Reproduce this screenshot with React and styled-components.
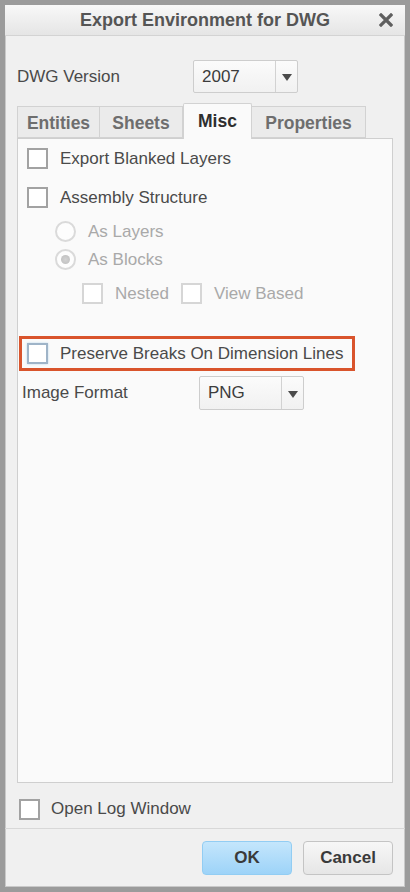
import React from "react";
import styled, { createGlobalStyle } from "styled-components";

const GlobalStyle = createGlobalStyle`
  html, body {
    margin: 0;
    padding: 0;
    background: #ffffff;
  }
  * {
    box-sizing: border-box;
  }
`;

const Window = styled.div`
  width: 410px;
  height: 892px;
  border: 5px solid #9b9b9b;
  box-shadow: inset 0 0 0 1px #c9c9c9;
  background: #f0f0f0;
  display: flex;
  flex-direction: column;
  font-family: "Liberation Sans", Arial, sans-serif;
  font-size: 17px;
  color: #4a4a4a;
`;

const TitleBar = styled.div`
  height: 31px;
  flex-shrink: 0;
  background: linear-gradient(#f8f8f8, #e5e5e5);
  border-bottom: 1px solid #d3d3d3;
  display: flex;
  align-items: center;
  justify-content: center;
  position: relative;
  font-weight: bold;
  font-size: 18px;
  color: #555555;
`;

const CloseButton = styled.div`
  position: absolute;
  right: 12px;
  top: 8px;
  width: 14px;
  height: 14px;
  display: flex;
`;

const Main = styled.div`
  flex: 1;
  display: flex;
  flex-direction: column;
  padding: 24px 12px 9px 12px;
`;

const FieldRow = styled.div`
  display: flex;
  align-items: center;
  height: ${(p) => p.$h || 33}px;
  margin-top: ${(p) => p.$mt || 0}px;
  margin-left: ${(p) => p.$ml || 0}px;
`;

const FieldLabel = styled.span`
  width: ${(p) => p.$w}px;
  flex-shrink: 0;
`;

const Select = styled.div`
  width: ${(p) => p.$w}px;
  height: ${(p) => p.$h}px;
  display: flex;
  background: linear-gradient(#fbfbfb, #f1f1f1);
  border: 1px solid #cdcdcd;
  border-radius: 2px;
`;

const SelectValue = styled.div`
  flex: 1;
  display: flex;
  align-items: center;
  padding-left: 8px;
  color: #3c3c3c;
  border-right: 1px solid #d2d2d2;
`;

const SelectArrow = styled.div`
  width: 21px;
  display: flex;
  align-items: center;
  justify-content: center;
  &::after {
    content: "";
    border-left: 5px solid transparent;
    border-right: 5px solid transparent;
    border-top: 7px solid #4b4b4b;
    margin-top: 2px;
  }
`;

const TabStrip = styled.div`
  display: flex;
  align-items: flex-end;
  margin-top: 10px;
  height: 35px;
  flex-shrink: 0;
`;

const Tab = styled.div`
  width: ${(p) => p.$w}px;
  height: ${(p) => (p.$active ? 36 : 32)}px;
  margin-bottom: ${(p) => (p.$active ? -1 : 0)}px;
  display: flex;
  align-items: center;
  justify-content: center;
  font-weight: bold;
  font-size: 17.5px;
  color: ${(p) => (p.$active ? "#2e2e2e" : "#6e6e6e")};
  background: ${(p) => (p.$active ? "#fafafa" : "#ebebeb")};
  border: 1px solid #d2d2d2;
  border-bottom: ${(p) => (p.$active ? "none" : "1px solid #d2d2d2")};
  border-left: ${(p) => (p.$first || p.$active ? "1px solid #d2d2d2" : "none")};
  border-radius: ${(p) => (p.$active ? "2px 2px 0 0" : "0")};
  position: relative;
  z-index: ${(p) => (p.$active ? 1 : 0)};
  padding-top: ${(p) => (p.$active ? 0 : 2)}px;
`;

const Panel = styled.div`
  flex: 1;
  background: #fafafa;
  border: 1px solid #cfcfcf;
  padding: 9px 9px 0 9px;
  display: flex;
  flex-direction: column;
`;

const Row = styled.div`
  display: flex;
  align-items: center;
  height: 21px;
  margin-top: ${(p) => p.$mt || 0}px;
  padding-left: ${(p) => p.$indent || 0}px;
  gap: 12px;
  color: ${(p) => (p.$disabled ? "#a9a9a9" : "#4a4a4a")};
`;

const Box = styled.span`
  width: 21px;
  height: 21px;
  flex-shrink: 0;
  background: #ffffff;
  border: 2px solid ${(p) => (p.$disabled ? "#d6d6d6" : p.$focus ? "#9fb4c8" : "#a2a2a2")};
  box-shadow: ${(p) => (p.$focus ? "0 0 2px #bcd8ee" : "none")};
`;

const Radio = styled.span`
  width: 21px;
  height: 21px;
  flex-shrink: 0;
  border-radius: 50%;
  border: 2px solid #dadada;
  background: #fdfdfd;
  display: flex;
  align-items: center;
  justify-content: center;
  &::after {
    content: "";
    display: ${(p) => (p.$checked ? "block" : "none")};
    width: 9px;
    height: 9px;
    border-radius: 50%;
    background: radial-gradient(#d2d2d2, #bdbdbd);
  }
`;

const Pair = styled.span`
  display: flex;
  align-items: center;
  gap: 12px;
`;

const Highlight = styled.div`
  margin: 32px 28px 0 -8px;
  height: 35px;
  border: 3px solid #d9542c;
  display: flex;
  align-items: center;
  padding-left: 5px;
  gap: 12px;
`;

const LogRow = styled.div`
  display: flex;
  align-items: center;
  gap: 11px;
  height: 20px;
  margin-top: 16px;
  padding-left: 2px;
`;

const Footer = styled.div`
  height: 59px;
  flex-shrink: 0;
  border-top: 1px solid #d8d8d8;
  display: flex;
  justify-content: flex-end;
  align-items: flex-start;
  gap: 11px;
  padding: 12px 12px 0 0;
`;

const Button = styled.div`
  width: 90px;
  height: 34px;
  border-radius: 4px;
  display: flex;
  align-items: center;
  justify-content: center;
  font-weight: bold;
  color: #3a3a3a;
  border: 1px solid ${(p) => (p.$primary ? "#92cdf3" : "#c4c4c4")};
  background: ${(p) =>
    p.$primary
      ? "linear-gradient(#c4e6fc, #9dd3f8)"
      : "linear-gradient(#f7f7f7, #e6e6e6)"};
`;

export default function App() {
  return (
    <>
      <GlobalStyle />
      <Window>
        <TitleBar>
          Export Environment for DWG
          <CloseButton>
            <svg width="14" height="14" viewBox="0 0 14 14">
              <path d="M2 2 L12 12 M12 2 L2 12" stroke="#5f5f5f" strokeWidth="3.2" strokeLinecap="square" />
            </svg>
          </CloseButton>
        </TitleBar>
        <Main>
          <FieldRow>
            <FieldLabel $w={176}>DWG Version</FieldLabel>
            <Select $w={105} $h={33}>
              <SelectValue>2007</SelectValue>
              <SelectArrow />
            </Select>
          </FieldRow>
          <TabStrip>
            <Tab $w={83} $first>Entities</Tab>
            <Tab $w={83}>Sheets</Tab>
            <Tab $w={69} $active>Misc</Tab>
            <Tab $w={114}>Properties</Tab>
          </TabStrip>
          <Panel>
            <Row>
              <Box />
              Export Blanked Layers
            </Row>
            <Row $mt={18}>
              <Box />
              Assembly Structure
            </Row>
            <Row $mt={13} $indent={28} $disabled>
              <Radio />
              As Layers
            </Row>
            <Row $mt={7} $indent={28} $disabled>
              <Radio $checked />
              As Blocks
            </Row>
            <Row $mt={13} $indent={55} $disabled>
              <Pair>
                <Box $disabled />
                Nested
              </Pair>
              <Pair>
                <Box $disabled />
                View Based
              </Pair>
            </Row>
            <Highlight>
              <Box $focus />
              Preserve Breaks On Dimension Lines
            </Highlight>
            <FieldRow $h={34} $mt={5} $ml={-5}>
              <FieldLabel $w={177}>Image Format</FieldLabel>
              <Select $w={105} $h={34}>
                <SelectValue>PNG</SelectValue>
                <SelectArrow />
              </Select>
            </FieldRow>
          </Panel>
          <LogRow>
            <Box />
            Open Log Window
          </LogRow>
        </Main>
        <Footer>
          <Button $primary>OK</Button>
          <Button>Cancel</Button>
        </Footer>
      </Window>
    </>
  );
}
